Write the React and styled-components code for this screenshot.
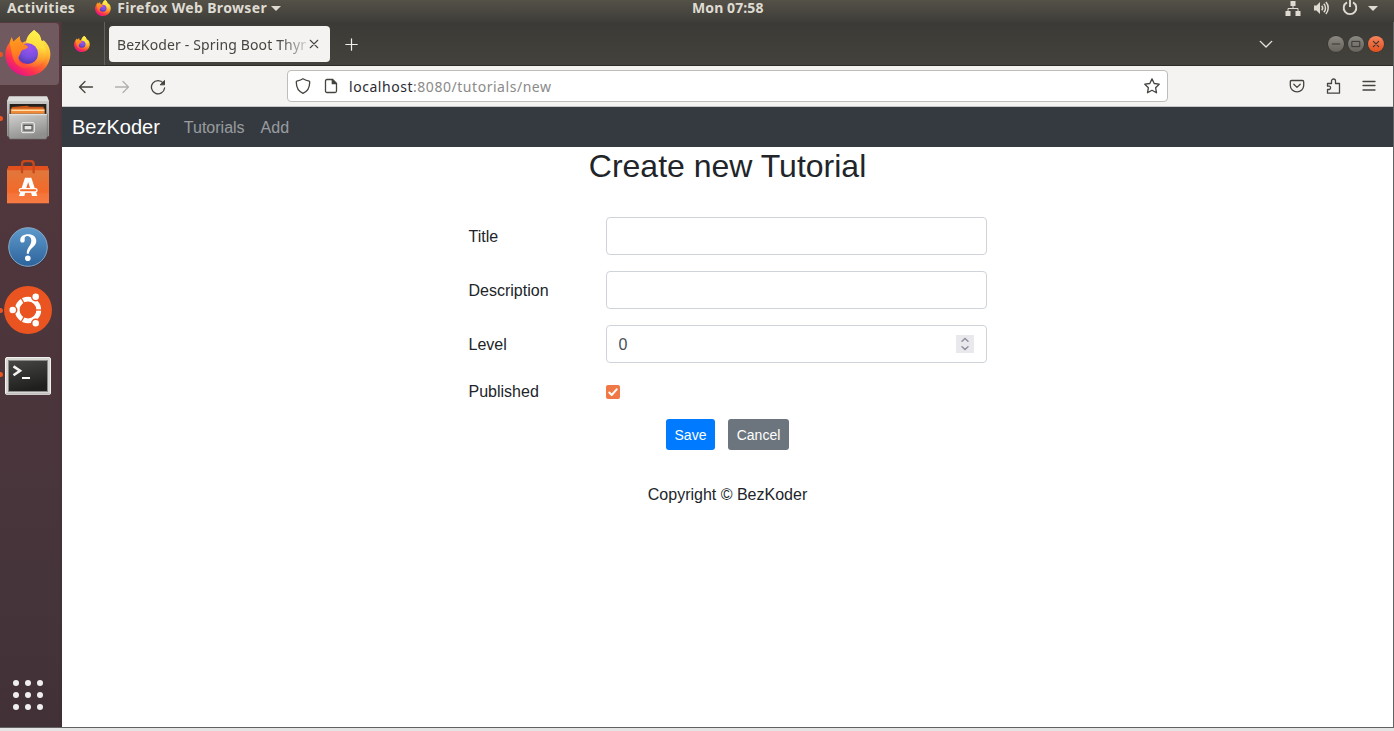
import React from 'react';
import styled, { createGlobalStyle } from 'styled-components';

const Global = createGlobalStyle`
  * { box-sizing: border-box; }
  body { margin: 0; background: #e4e4e4; overflow: hidden; }
  svg { display: block; flex: none; }
`;

const UI = '"Noto Sans", "Open Sans", sans-serif';
const PAGE = '"Liberation Sans", Arial, sans-serif';

const Desktop = styled.div`
  width: 1394px;
  height: 731px;
  display: flex;
  flex-direction: column;
  background: #e4e4e4;
`;
const TopBar = styled.header`
  height: 22px;
  display: grid;
  grid-template-columns: 692px 1fr auto;
  align-items: start;
  background: linear-gradient(#545148, #3e3d38);
  color: #dfdbd2;
  font: 700 14px/16px ${UI};
`;
const TopGroup = styled.div`
  display: flex;
  align-items: center;
  height: 16px;
  padding-left: 7px;
`;
const TopLabel = styled.span`
  letter-spacing: ${(p) => p.$track || 0}px;
  white-space: nowrap;
`;
const MenuIcon = styled.span`
  margin: 0 6px 1px 20px;
`;
const Tray = styled(TopGroup)`
  gap: 12px;
  padding: 0 16px 0 0;
`;
const Caret = styled.i`
  border: 5px solid transparent;
  border-top-color: #dfdbd2;
  border-bottom: 0;
  margin-left: ${(p) => p.$left}px;
`;
const Workspace = styled.div`
  display: flex;
  height: 706px;
  border-bottom: 1px solid #626262;
`;
const Dock = styled.nav`
  width: 62px;
  display: flex;
  flex-direction: column;
  background: linear-gradient(90deg, transparent 58px, rgba(40, 20, 30, 0.12)),
    linear-gradient(#543a3f, #4e363c 35%, #46343b 80%, #413136);
`;
const DockItem = styled.div`
  position: relative;
  width: 59px;
  height: 62px;
  margin: 1px 0;
  padding: ${(p) => p.$drop || 0}px 3px ${(p) => p.$lift || 0}px 0;
  display: flex;
  align-items: center;
  justify-content: center;
  border-radius: 0 4px 4px 0;
  background: ${(p) => (p.$active ? '#705a5f' : 'transparent')};
`;
const RunningDot = styled.i`
  position: absolute;
  left: -2px;
  top: 29px;
  width: 5px;
  height: 5px;
  border-radius: 50%;
  background: #e95420;
`;
const AppGrid = styled.div`
  margin: auto 0 17px 13px;
  display: grid;
  grid-template-columns: repeat(3, 6px);
  gap: 6px;
`;
const GridDot = styled.i`
  width: 6px;
  height: 6px;
  border-radius: 50%;
  background: #f0efee;
`;
const Browser = styled.section`
  flex: 1;
  display: flex;
  flex-direction: column;
  background: #fff;
  border-right: 1px solid #626262;
`;
const TabStrip = styled.div`
  height: 44px;
  display: flex;
  align-items: center;
  background: linear-gradient(#3b3a36, #43423c);
  border-bottom: 1px solid #2d2c29;
`;
const PinnedTab = styled.div`
  width: 43px;
  height: 43px;
  padding-left: 12px;
  display: flex;
  align-items: center;
  border-right: 1px solid #62615c;
`;
const Tab = styled.div`
  width: 221px;
  height: 36px;
  margin: 1px 15px 0 4px;
  padding: 0 10px 0 8px;
  display: flex;
  align-items: center;
  border-radius: 4px;
  background: #f4f3f1;
  color: #46453f;
`;
const TabTitle = styled.span`
  width: 189px;
  padding-top: 2px;
  overflow: hidden;
  white-space: nowrap;
  font: 14px/20px ${UI};
  letter-spacing: 0.14px;
  mask-image: linear-gradient(90deg, #000 162px, transparent 196px);
  margin-right: 3px;
`;
const NewTab = styled.span`
  padding-top: 2px;
`;
const WindowControls = styled.div`
  margin-left: auto;
  display: flex;
  align-items: center;
  padding-right: 9px;
  gap: 4px;
`;
const TabList = styled.span`
  margin-right: 51px;
`;
const WindowButton = styled.span`
  width: 16px;
  height: 16px;
  border-radius: 50%;
  display: flex;
  align-items: center;
  justify-content: center;
  background: ${(p) => (p.$close ? 'linear-gradient(#f4845c, #e2501e)' : 'linear-gradient(#8a8881, #65635c)')};
  box-shadow: 0 0 0 0.5px #2f2e2a;
`;
const Toolbar = styled.div`
  height: 41px;
  display: flex;
  align-items: center;
  padding: 0 16px;
  background: #f4f3f1;
  border-bottom: 1px solid #c9c7c5;
`;
const NavIcons = styled.div`
  display: flex;
  gap: 20px;
  width: 209px;
  padding-top: 1px;
`;
const AddressBar = styled.div`
  width: 881px;
  height: 32px;
  padding: 0 7px;
  display: flex;
  align-items: center;
  background: #fff;
  border: 1px solid #bfbcba;
  border-radius: 4px;
`;
const PageIcon = styled.span`
  margin: 0 10px 0 12px;
`;
const Url = styled.span`
  padding-top: 2px;
  font: 14px/20px ${UI};
  letter-spacing: 0.54px;
  color: #8b8a88;
  flex: 1;
  b { font-weight: 400; color: #2b2a33; }
`;
const ToolIcons = styled.div`
  margin-left: auto;
  display: flex;
  gap: 20px;
`;
const Navbar = styled.nav`
  height: 40px;
  display: flex;
  align-items: center;
  padding-left: 10px;
  background: #343a40;
  font: 16px/24px ${PAGE};
`;
const Brand = styled.span`
  color: #fff;
  font-size: 20px;
  line-height: 30px;
  margin-right: 16px;
`;
const NavLink = styled.a`
  padding: 2px 8px 0;
  color: rgba(255, 255, 255, 0.5);
`;
const Main = styled.main`
  display: flex;
  flex-direction: column;
  align-items: center;
  color: #212529;
  font: 16px/24px ${PAGE};
`;
const Heading = styled.h2`
  margin: 0 0 32px;
  font-weight: 400;
  font-size: 32px;
  line-height: 38px;
`;
const Form = styled.form`
  width: 518px;
  display: flex;
  flex-direction: column;
`;
const Row = styled.div`
  display: grid;
  grid-template-columns: 137px 381px;
  grid-template-rows: 100%;
  align-items: center;
  height: ${(p) => p.$height || 38}px;
  margin-bottom: 16px;
`;
const Label = styled.label`
  padding-top: 2px;
`;
const Field = styled.div`
  height: 38px;
  display: flex;
  align-items: center;
  padding: 0 12px;
  border: 1px solid #ced4da;
  border-radius: 4px;
`;
const Input = styled.input`
  flex: 1;
  min-width: 0;
  padding: 2px 0 0;
  border: 0;
  outline: 0;
  background: transparent;
  color: #495057;
  font: 16px/24px ${PAGE};
`;
const Spinner = styled.span`
  width: 18px;
  height: 18px;
  background: #e9e9ed;
`;
const Checkbox = styled.span`
  width: 14px;
  height: 14px;
  margin-top: 1px;
  border-radius: 2px;
  background: #f07746;
`;
const Actions = styled.div`
  display: flex;
  justify-content: center;
  gap: 13px;
`;
const Button = styled.button`
  width: ${(p) => p.$width}px;
  height: 31px;
  padding: 2px 0 0;
  border: 0;
  border-radius: 3px;
  color: #fff;
  background: ${(p) => p.$color};
  font: 14px/21px ${PAGE};
`;
const Footer = styled.footer`
  margin-top: 33px;
`;

const Stroke = ({ size = 16, color = '#45443f', width = 1.3, children }) => (
  <svg width={size} height={size} viewBox="0 0 16 16" fill="none" stroke={color} strokeWidth={width} strokeLinecap="round" strokeLinejoin="round">{children}</svg>
);

const Firefox = ({ size, id }) => (
  <svg width={size} height={size} viewBox="0 0 136 138">
    <defs>
      <linearGradient id={`${id}-b`} x1=".8" y1=".1" x2=".25" y2=".95">
        <stop offset="0" stopColor="#fff44f" /><stop offset=".3" stopColor="#ffb52e" />
        <stop offset=".55" stopColor="#ff6a2b" /><stop offset=".78" stopColor="#ff3150" /><stop offset="1" stopColor="#e31587" />
      </linearGradient>
      <linearGradient id={`${id}-f`} x1=".5" y1="0" x2=".4" y2="1">
        <stop offset="0" stopColor="#fff34c" /><stop offset=".45" stopColor="#ffdc3e" /><stop offset=".75" stopColor="#ffa02c" /><stop offset="1" stopColor="#ff5a36" />
      </linearGradient>
      <radialGradient id={`${id}-p`} cx=".6" cy=".2" r=".9">
        <stop offset="0" stopColor="#a052ee" /><stop offset=".5" stopColor="#7a4fe0" /><stop offset="1" stopColor="#4a36a8" />
      </radialGradient>
      <linearGradient id={`${id}-h`} x1=".1" y1="0" x2=".3" y2="1">
        <stop offset="0" stopColor="#ffa01e" /><stop offset=".5" stopColor="#ff8420" /><stop offset="1" stopColor="#ff4a3c" />
      </linearGradient>
    </defs>
    <path fill={`url(#${id}-b)`} d="M87 0C91 7 103 10 106 24L109 34L115 31C129 43 136 58 135 76C132 113 102 138 67 138C29 138 0 110 0 73C0 59 5 46 13 38L19 22L24 35L43 19C43 30 46 35 51 38C57 35 60 34 63 34C65 18 76 8 87 0Z" />
    <path fill={`url(#${id}-f)`} d="M87 0C91 7 103 10 106 24C108 38 126 50 123 77C118 98 99 111 80 112C69 112 57 108 50 101C68 108 88 100 95 84C101 68 91 50 77 43L62 37C65 18 76 8 87 0Z" />
    <circle cx="67" cy="71" r="31" fill={`url(#${id}-p)`} />
    <path fill={`url(#${id}-h)`} d="M13 38L19 22L24 35L43 19C43 32 47 38 56 43C60 46 66 46 68 51C65 58 54 58 49 62C45 66 46 71 43 75C38 81 38 91 46 98C55 106 70 110 82 106C68 119 42 115 30 98C19 81 19 60 13 38Z" />
  </svg>
);

const Files = () => (
  <svg width="42" height="44" viewBox="0 0 126 130">
    <defs>
      <linearGradient id="cab" x2="0" y2="1"><stop stopColor="#d0d0ce" /><stop offset="1" stopColor="#8e8e8c" /></linearGradient>
      <linearGradient id="drawer" x2=".4" y2="1"><stop stopColor="#d2d2d0" /><stop offset="1" stopColor="#8f8f8d" /></linearGradient>
    </defs>
    <path d="M6 0H120L126 14V120H0V14Z" fill="url(#cab)" /><path d="M6 1H120L125 14H1Z" fill="#dededc" />
    <rect x="8" y="23" width="110" height="33" fill="#24211f" />
    <path d="M14 32L60 28L68 31H110V56H14Z" fill="#c9591b" /><rect x="11" y="37" width="102" height="19" fill="#f08a36" /><rect x="14" y="40" width="98" height="4" fill="#ffdfae" />
    <path d="M5 53H121V120L117 128H8L5 120Z" fill="url(#drawer)" stroke="#70706e" strokeWidth="2" />
    <path d="M6 55H120" stroke="#eaeae8" strokeWidth="3" />
    <rect x="44" y="79" width="38" height="30" rx="4" fill="#a2a2a0" stroke="#f0f0ee" strokeWidth="3" /><rect x="51" y="87" width="24" height="14" fill="#e7e7e5" stroke="#444" strokeWidth="3" />
  </svg>
);

const Software = () => (
  <svg width="42" height="44" viewBox="0 0 126 132">
    <defs><linearGradient id="bag" x2="0" y2="1"><stop stopColor="#dc7a40" /><stop offset=".65" stopColor="#f36a2b" /><stop offset="1" stopColor="#f4733a" /></linearGradient></defs>
    <path d="M5 18H121L126 31V130H0V31Z" fill="url(#bag)" /><path d="M5 18H121L126 31H0Z" fill="#e2511d" />
    <path d="M0 100H126V130H0Z" fill="#fb8a55" opacity=".3" />
    <path d="M45 40V13Q45 3 55 3H70Q80 3 80 13V40" fill="none" stroke="#c9481b" strokeWidth="7" />
    <path fillRule="evenodd" d="M54 53H73L91 108H75L72 97H55L52 108H36ZM63.5 66L58 84H69Z" fill="#fff" />
    <rect x="37" y="86" width="53" height="10" rx="5" fill="#f36a2b" stroke="#fff" strokeWidth="4" />
  </svg>
);

const Help = () => (
  <svg width="42" height="42" viewBox="0 0 42 42">
    <defs><linearGradient id="help" x2="0" y2="1"><stop stopColor="#5f9acb" /><stop offset="1" stopColor="#2c639c" /></linearGradient></defs>
    <circle cx="21" cy="21.7" r="20" fill="#2d2b38" opacity=".5" />
    <circle cx="21" cy="21" r="19.3" fill="url(#help)" stroke="#8aa9c6" strokeWidth="1" />
    <path d="M13.2 14.4C13.2 10.5 16.5 8.3 21 8.3C26 8.3 29.3 10.8 29.3 15C29.3 20.8 22.6 21.5 21.8 27.8H19.8C19.5 21.5 24.3 20 24.3 14.8C24.3 11.6 22.6 10.1 20.4 10.1C18.2 10.1 17.3 11.3 17.7 13.9C18 17.3 13.4 17.5 13.2 14.4Z" fill="#fff" />
    <circle cx="20.8" cy="32.3" r="2.8" fill="#fff" />
  </svg>
);

const Ubuntu = () => (
  <svg width="48" height="48" viewBox="0 0 48 48">
    <circle cx="24" cy="24" r="24" fill="#e95420" />
    <circle cx="24" cy="24" r="10.8" fill="none" stroke="#fff" strokeWidth="4.8" />
    <g stroke="#e95420" strokeWidth="1.3"><path d="M24 24H39" /><path d="M24 24L16.5 11" /><path d="M24 24L16.5 37" /></g>
    {[[8.7, 24], [31.7, 10.7], [31.7, 37.3]].map(([x, y]) => (
      <circle key={`${x}-${y}`} cx={x} cy={y} r="4" fill="#fff" stroke="#e95420" strokeWidth="1.5" />
    ))}
  </svg>
);

const Terminal = () => (
  <svg width="46" height="38" viewBox="0 0 46 38">
    <defs><linearGradient id="term" x2=".3" y2="1"><stop stopColor="#474744" /><stop offset="1" stopColor="#1f1f1e" /></linearGradient></defs>
    <rect x=".5" y=".5" width="45" height="37" rx="1.5" fill="#d7d7d4" stroke="#f1f1ef" />
    <path d="M1 37H45" stroke="#aaa" />
    <rect x="3.5" y="3.5" width="39" height="31" fill="url(#term)" stroke="#8b8b89" />
    <path d="M8.5 9.3L15 13.7L8.5 18.2" fill="none" stroke="#f4f4f4" strokeWidth="2.6" /><path d="M17 21H25" stroke="#fff" strokeWidth="2" />
  </svg>
);

const dock = [
  { name: 'firefox', icon: <Firefox size={46} id="dock" />, running: true, active: true, lift: 2 },
  { name: 'files', icon: <Files />, running: true },
  { name: 'software', icon: <Software /> },
  { name: 'help', icon: <Help />, drop: 2 },
  { name: 'ubuntu', icon: <Ubuntu />, running: true },
  { name: 'terminal', icon: <Terminal />, running: true, drop: 4 },
];

export default function App() {
  return (
    <Desktop>
      <Global />
      <TopBar>
        <TopGroup>
          <TopLabel $track={0.32}>Activities</TopLabel>
          <MenuIcon><Firefox size={16} id="menu" /></MenuIcon>
          <TopLabel $track={0.34}>Firefox Web Browser</TopLabel>
          <Caret $left={4} />
        </TopGroup>
        <TopLabel $track={0.1}>Mon 07:58</TopLabel>
        <Tray>
          <svg width="16" height="16" viewBox="0 0 16 16" fill="#dfdbd2"><path d="M5.5 1h5v5h-5zM.5 11h5v5h-5zM10.5 11h5v5h-5z" /><path d="M8 6v2.7M3 11V8.5h10V11" fill="none" stroke="#dfdbd2" /></svg>
          <svg width="17" height="16" viewBox="0 0 17 16" fill="none" stroke="#dfdbd2" strokeWidth="1.5"><path d="M1 5.5h2.5L7 2v12l-3.5-3.5H1z" fill="#dfdbd2" stroke="none" /><path d="M8.7 5.7a3.5 3.5 0 0 1 0 4.6M10.8 3.8a6 6 0 0 1 0 8.4M12.9 2a9 9 0 0 1 0 12" /></svg>
          <svg width="16" height="16" viewBox="0 0 16 16" fill="none" stroke="#dfdbd2" strokeWidth="1.9"><path d="M5 2.3a6.3 6.3 0 1 0 6 0M8 0v7" /></svg>
          <Caret $left={-2} />
        </Tray>
      </TopBar>
      <Workspace>
        <Dock>
          {dock.map((d) => (
            <DockItem key={d.name} $active={d.active} $drop={d.drop} $lift={d.lift}>{d.running && <RunningDot />}{d.icon}</DockItem>
          ))}
          <AppGrid>{Array.from({ length: 9 }, (_, i) => <GridDot key={i} />)}</AppGrid>
        </Dock>
        <Browser>
          <TabStrip>
            <PinnedTab><Firefox size={16} id="pin" /></PinnedTab>
            <Tab>
              <TabTitle>BezKoder - Spring Boot Thymeleaf</TabTitle>
              <Stroke size={10} width={1.8}><path d="M2 2L14 14M14 2L2 14" /></Stroke>
            </Tab>
            <NewTab><Stroke size={13} color="#f0efec" width={1.5}><path d="M8 1V15M1 8H15" /></Stroke></NewTab>
            <WindowControls>
              <TabList><Stroke size={14} color="#e6e4df" width={1.6}><path d="M1.5 5L8 11.5L14.5 5" /></Stroke></TabList>
              <WindowButton><Stroke size={12} color="#35342f"><path d="M3 8H13" /></Stroke></WindowButton>
              <WindowButton><Stroke size={12} color="#35342f"><path d="M3 4.5H13V11.5H3Z" /></Stroke></WindowButton>
              <WindowButton $close><Stroke size={12} color="#35342f" width={1.5}><path d="M4.5 4.5L11.5 11.5M11.5 4.5L4.5 11.5" /></Stroke></WindowButton>
            </WindowControls>
          </TabStrip>
          <Toolbar>
            <NavIcons>
              <Stroke><path d="M1.5 8H14.5M7 2.5L1.5 8L7 13.5" /></Stroke>
              <Stroke color="#b1b0ad"><path d="M1.5 8H14.5M9 2.5L14.5 8L9 13.5" /></Stroke>
              <Stroke><path d="M13.3 4.2A6.6 6.6 0 1 0 14.6 9" /><path d="M14.5 1.8V5.8H10.5Z" fill="#45443f" strokeWidth="1" /></Stroke>
            </NavIcons>
            <AddressBar>
              <Stroke><path d="M8 .8C10 2.3 12.5 2.8 14.6 3.3C15 8.5 13.3 13 8 15.3C2.7 13 1 8.5 1.4 3.3C3.5 2.8 6 2.3 8 .8Z" /></Stroke>
              <PageIcon><Stroke><path d="M4 1.5H9.5L13.5 5.5V13Q13.5 14.5 12 14.5H4Q2.5 14.5 2.5 13V3Q2.5 1.5 4 1.5Z" /><path d="M9.3 1.5V5.7H13.5Z" fill="#45443f" /></Stroke></PageIcon>
              <Url><b>localhost</b>:8080/tutorials/new</Url>
              <Stroke><path d="M8 .9L10.2 5.5L15.2 6.2L11.6 9.7L12.5 14.8L8 12.3L3.5 14.8L4.4 9.7L.8 6.2L5.8 5.5Z" /></Stroke>
            </AddressBar>
            <ToolIcons>
              <Stroke><path d="M2.6 2.5H13.4Q14.7 2.5 14.7 3.8V7.5A6.7 6.3 0 0 1 1.3 7.5V3.8Q1.3 2.5 2.6 2.5ZM4.8 6.3L8 9.4L11.2 6.3" /></Stroke>
              <Stroke><path d="M2.5 5.5H6.5V3A2 2 0 0 1 10.5 3V5.500H14.5V15.2H2.5V11.5H4.3A1.7 1.7 0 0 0 4.3 8.2H2.5Z" /></Stroke>
              <Stroke><path d="M2 3.5H14M2 7.5H14M2 12H14" /></Stroke>
            </ToolIcons>
          </Toolbar>
          <Navbar>
            <Brand>BezKoder</Brand>
            <NavLink>Tutorials</NavLink>
            <NavLink>Add</NavLink>
          </Navbar>
          <Main>
            <Heading>Create new Tutorial</Heading>
            <Form>
              <Row><Label>Title</Label><Field><Input /></Field></Row>
              <Row><Label>Description</Label><Field><Input /></Field></Row>
              <Row>
                <Label>Level</Label>
                <Field>
                  <Input defaultValue="0" />
                  <Spinner><svg width="18" height="18" viewBox="0 0 18 18" fill="none" stroke="#8f8f9d" strokeWidth="1.5" strokeLinecap="round"><path d="M6 6.2L9 3.5L12 6.2M6 11.8L9 14.5L12 11.8" /></svg></Spinner>
                </Field>
              </Row>
              <Row $height={24}>
                <Label>Published</Label>
                <Checkbox><svg width="14" height="14" viewBox="0 0 14 14" fill="none" stroke="#fff" strokeWidth="2" strokeLinecap="round" strokeLinejoin="round"><path d="M3.3 7.5L5.7 10L10.7 4.3" /></svg></Checkbox>
              </Row>
              <Actions>
                <Button type="button" $width={49} $color="#007bff">Save</Button>
                <Button type="button" $width={61} $color="#6c757d">Cancel</Button>
              </Actions>
            </Form>
            <Footer>Copyright © BezKoder</Footer>
          </Main>
        </Browser>
      </Workspace>
    </Desktop>
  );
}
